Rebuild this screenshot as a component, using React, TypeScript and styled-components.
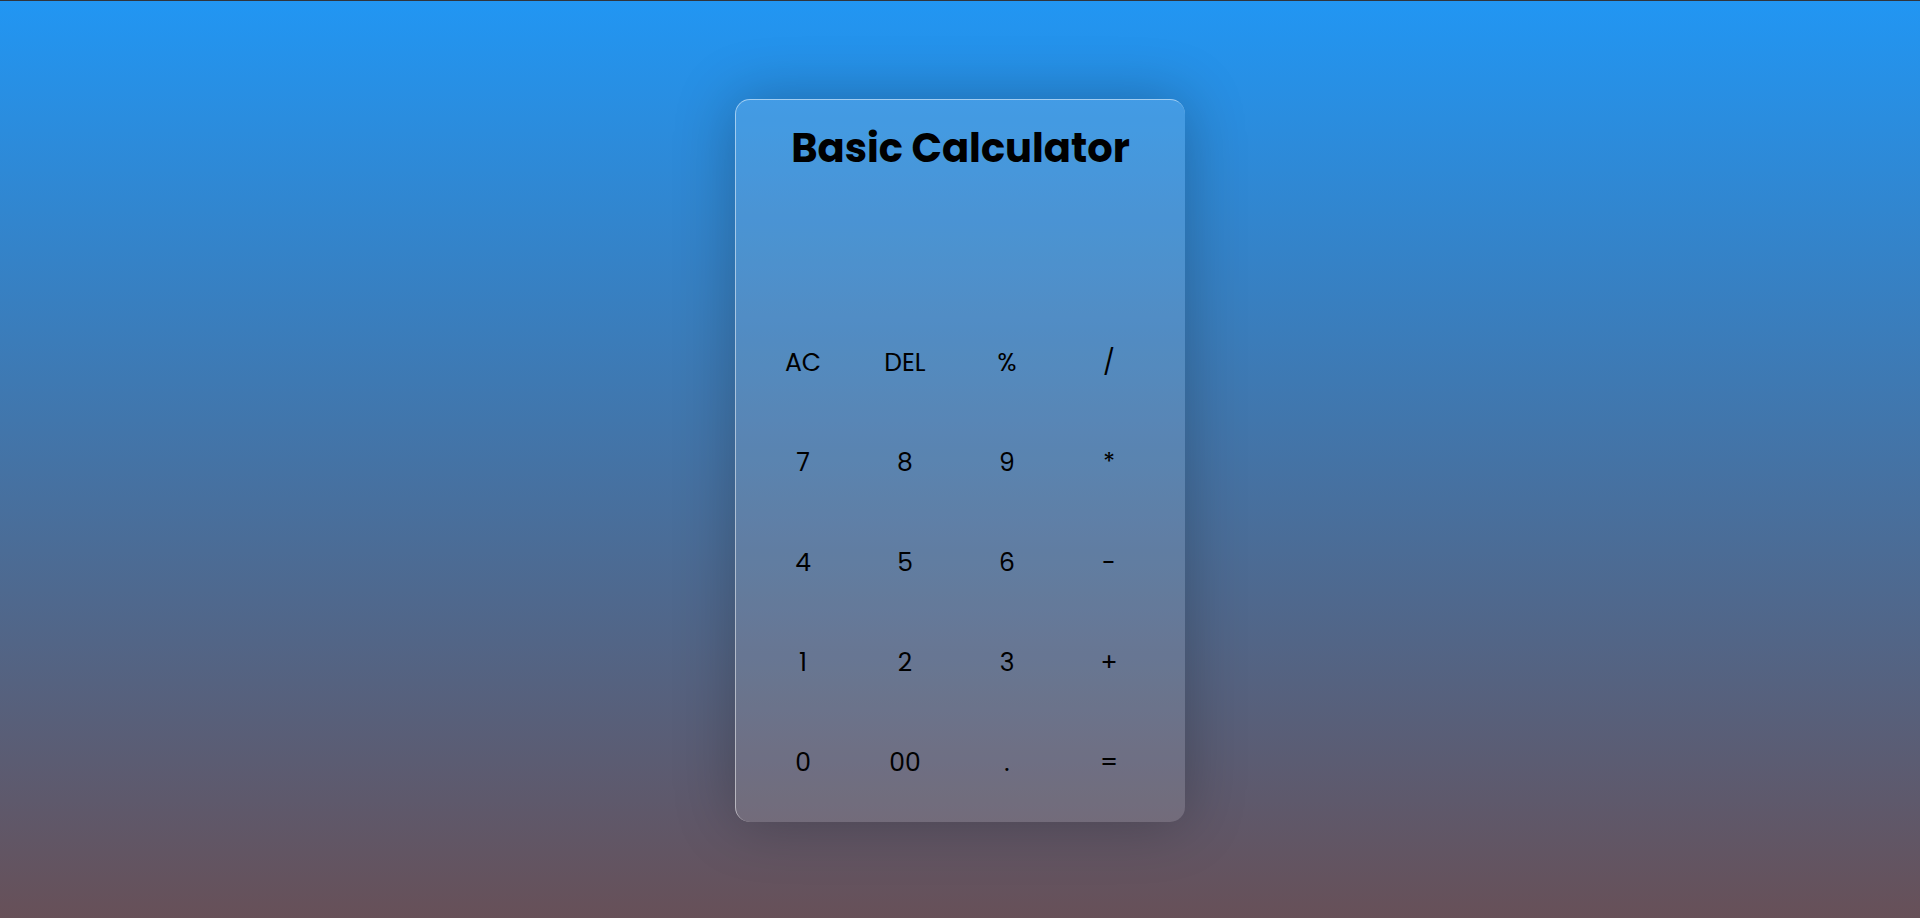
import React from "react";
import styled, { createGlobalStyle } from "styled-components";

const Global = createGlobalStyle`
  * { box-sizing: border-box; }
  html, body { margin: 0; padding: 0; height: 100%; }
  body {
    font-family: "Poppins", "Lato", "Noto Sans", sans-serif;
    background: linear-gradient(to bottom, #2196f3 0%, #675058 100%);
    border-top: 1px solid #30353d;
    min-height: 918px;
  }
  #root { height: 100%; }
`;

const Page = styled.main`
  min-height: 917px;
  display: flex;
  align-items: center;
  justify-content: center;
`;

const Card = styled.section`
  width: 450px;
  height: 723px;
  margin-top: 1px;
  border-radius: 15px;
  background: rgba(255, 255, 255, 0.12);
  border-top: 1px solid rgba(255, 255, 255, 0.5);
  border-left: 1px solid rgba(255, 255, 255, 0.5);
  box-shadow: 0 0 60px rgba(0, 0, 0, 0.25);
  display: flex;
  flex-direction: column;
`;

const Title = styled.h1`
  margin: 0;
  padding-top: 18px;
  font-family: "Poppins", "Lato", "Noto Sans", sans-serif;
  font-weight: 700;
  font-size: 40px;
  line-height: 60px;
  color: #000;
  text-align: center;
`;

const Display = styled.div`
  height: 135px;
`;

const Keys = styled.div`
  display: grid;
  grid-template-columns: repeat(4, 102px);
  grid-auto-rows: 100px;
  padding-left: 16px;
`;

const Key = styled.button`
  border: none;
  background: transparent;
  font-family: "Poppins", "Lato", "Noto Sans", sans-serif;
  font-weight: 400;
  font-size: 25px;
  color: #000;
  display: flex;
  align-items: center;
  justify-content: center;
  padding: 0;
  cursor: pointer;
`;

const keys = [
  "AC", "DEL", "%", "/",
  "7", "8", "9", "*",
  "4", "5", "6", "-",
  "1", "2", "3", "+",
  "0", "00", ".", "=",
];

export default function App() {
  return (
    <>
      <Global />
      <Page>
        <Card>
          <Title>Basic Calculator</Title>
          <Display />
          <Keys>
            {keys.map((k) => (
              <Key key={k}>{k}</Key>
            ))}
          </Keys>
        </Card>
      </Page>
    </>
  );
}
